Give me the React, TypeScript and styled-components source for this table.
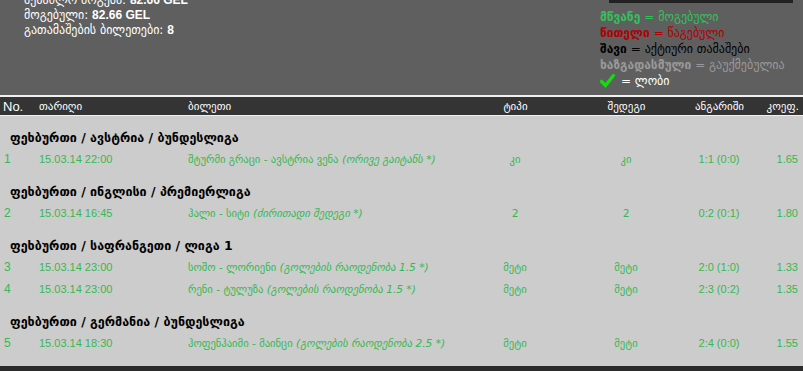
import styled, { createGlobalStyle } from "styled-components";

const GlobalStyle = createGlobalStyle`
    html, body {
        margin: 0;
        padding: 0;
        background: #2b2b2b;
        overflow: hidden;
    }
    body {
        font-family: "Liberation Sans", "DejaVu Sans", sans-serif;
    }
`;

type Bet = {
    no: number;
    date: string;
    teams: string;
    market: string;
    type: string;
    result: string;
    score: string;
    coef: string;
};

type Group = { title: string; bets: Bet[] };

const groups: Group[] = [
    {
        title: "ფეხბურთი / ავსტრია / ბუნდესლიგა",
        bets: [
            {
                no: 1,
                date: "15.03.14 22:00",
                teams: "შტურმი გრაცი - ავსტრია ვენა",
                market: "(ორივე გაიტანს *)",
                type: "კი",
                result: "კი",
                score: "1:1 (0:0)",
                coef: "1.65"
            }
        ]
    },
    {
        title: "ფეხბურთი / ინგლისი / პრემიერლიგა",
        bets: [
            {
                no: 2,
                date: "15.03.14 16:45",
                teams: "ჰალი - სიტი",
                market: "(ძირითადი შედეგი *)",
                type: "2",
                result: "2",
                score: "0:2 (0:1)",
                coef: "1.80"
            }
        ]
    },
    {
        title: "ფეხბურთი / საფრანგეთი / ლიგა 1",
        bets: [
            {
                no: 3,
                date: "15.03.14 23:00",
                teams: "სოშო - ლორიენი",
                market: "(გოლების რაოდენობა 1.5 *)",
                type: "მეტი",
                result: "მეტი",
                score: "2:0 (1:0)",
                coef: "1.33"
            },
            {
                no: 4,
                date: "15.03.14 23:00",
                teams: "რენი - ტულუზა",
                market: "(გოლების რაოდენობა 1.5 *)",
                type: "მეტი",
                result: "მეტი",
                score: "2:3 (0:2)",
                coef: "1.35"
            }
        ]
    },
    {
        title: "ფეხბურთი / გერმანია / ბუნდესლიგა",
        bets: [
            {
                no: 5,
                date: "15.03.14 18:30",
                teams: "ჰოფენჰაიმი - მაინცი",
                market: "(გოლების რაოდენობა 2.5 *)",
                type: "მეტი",
                result: "მეტი",
                score: "2:4 (0:0)",
                coef: "1.55"
            }
        ]
    }
];

const Checkmark = () => (
    <svg width="15" height="14" viewBox="0 0 15 14">
        <path
            d="M1.5 7.5 L5.5 11.5 L13.5 1.5"
            fill="none"
            stroke="#11dd11"
            strokeWidth="3.2"
            strokeLinecap="square"
        />
    </svg>
);

const App = () => {
    return (
        <>
            <GlobalStyle />
            <Page>
                <TopPanel>
                    <Stats>
                        <div>
                            შესაძლო მოგება: <b>82.66 GEL</b>
                        </div>
                        <div>
                            მოგებული: <b>82.66 GEL</b>
                        </div>
                        <div>
                            გათამაშების ბილეთები: <b>8</b>
                        </div>
                    </Stats>
                    <Legend>
                        <TopBar />
                        <LegendLine $color="#33c15a">
                            <b>მწვანე</b> = მოგებული
                        </LegendLine>
                        <LegendLine $color="#b00000">
                            <b>წითელი</b> = წაგებული
                        </LegendLine>
                        <LegendLine $color="#000000">
                            <b>შავი</b> = აქტიური თამაშები
                        </LegendLine>
                        <LegendLine $color="#9a9a9a">
                            <b>ხაზგადასმული</b> = გაუქმებულია
                        </LegendLine>
                        <LegendLine $color="#ffffff">
                            <Checkmark /> = ლობი
                        </LegendLine>
                    </Legend>
                </TopPanel>
                <HeadRow>
                    <HeadCell>No.</HeadCell>
                    <HeadCell $geo>თარიღი</HeadCell>
                    <HeadCell $geo>ბილეთი</HeadCell>
                    <HeadCell $geo $align="center">ტიპი</HeadCell>
                    <HeadCell $geo $align="center">შედეგი</HeadCell>
                    <HeadCell $geo $align="center">ანგარიში</HeadCell>
                    <HeadCell $geo $align="right">კოეფ.</HeadCell>
                </HeadRow>
                <Body>
                    {groups.map(g => (
                        <div key={g.title}>
                            <GroupTitle>{g.title}</GroupTitle>
                            {g.bets.map(b => (
                                <BetRow key={b.no}>
                                    <Num>{b.no}</Num>
                                    <Cell>{b.date}</Cell>
                                    <Cell $geo>
                                        {b.teams} <i>{b.market}</i>
                                    </Cell>
                                    <Cell $geo $align="center">
                                        {b.type}
                                    </Cell>
                                    <Cell $geo $align="center">
                                        {b.result}
                                    </Cell>
                                    <Cell $align="center">{b.score}</Cell>
                                    <Cell $align="right">{b.coef}</Cell>
                                </BetRow>
                            ))}
                        </div>
                    ))}
                </Body>
                <Footer />
            </Page>
        </>
    );
};

const COLUMNS = "36px 149px 277px 108px 114px 72px 1fr";
const GEO = `"DejaVu Sans", "Liberation Sans", sans-serif`;

const Page = styled.div`
    width: 803px;
    height: 371px;
    display: flex;
    flex-direction: column;
    background: #cccccc;
`;

const TopPanel = styled.div`
    height: 95px;
    flex-shrink: 0;
    display: flex;
    justify-content: space-between;
    background: #5f5f5f;
    border-bottom: 2px solid #f0f0f0;
    overflow: hidden;
`;

const Stats = styled.div`
    margin-top: -7px;
    padding-left: 24px;
    color: #ffffff;
    font-family: ${GEO};
    font-size: 12px;
    line-height: 15px;
    b {
        font-family: "Liberation Sans", sans-serif;
        font-size: 12px;
        font-weight: bold;
    }
`;

const Legend = styled.div`
    width: 203px;
    display: flex;
    flex-direction: column;
`;

const TopBar = styled.div`
    width: 184px;
    height: 3px;
    margin-left: 9px;
    margin-bottom: 6px;
    background: #222222;
`;

const LegendLine = styled.div<{ $color: string }>`
    display: flex;
    align-items: center;
    gap: 4px;
    height: 16px;
    color: ${p => p.$color};
    font-family: ${GEO};
    font-size: 12px;
    white-space: nowrap;
    b {
        font-weight: bold;
    }
    svg {
        margin-right: 2px;
    }
`;

const HeadRow = styled.div`
    display: grid;
    grid-template-columns: ${COLUMNS};
    align-items: center;
    height: 18px;
    flex-shrink: 0;
    background: #343434;
    border-bottom: 1px solid #f0f0f0;
    color: #ffffff;
`;

const HeadCell = styled.div<{ $geo?: boolean; $align?: string }>`
    padding: 0 4px 0 3px;
    text-align: ${p => p.$align || "left"};
    font-family: ${p => (p.$geo ? GEO : `"Liberation Sans", sans-serif`)};
    font-size: ${p => (p.$geo ? "11px" : "13px")};
    white-space: nowrap;
`;

const Body = styled.div`
    flex: 1;
    padding-bottom: 11px;
`;

const GroupTitle = styled.div`
    padding: 12px 0 0 10px;
    height: 20px;
    line-height: 20px;
    color: #000000;
    font-family: ${GEO};
    font-size: 12.5px;
    font-weight: bold;
    white-space: nowrap;
`;

const BetRow = styled.div`
    display: grid;
    grid-template-columns: ${COLUMNS};
    align-items: center;
    height: 22px;
    color: #35b84f;
`;

const Cell = styled.div<{ $geo?: boolean; $align?: string }>`
    padding: 0 5px 0 3px;
    text-align: ${p => p.$align || "left"};
    font-family: ${p => (p.$geo ? GEO : `"Liberation Sans", sans-serif`)};
    font-size: ${p => (p.$geo ? "10.6px" : "11px")};
    white-space: nowrap;
    i {
        font-style: italic;
    }
`;

const Num = styled(Cell)`
    padding-left: 4px;
    font-size: 12px;
`;

const Footer = styled.div`
    height: 5px;
    flex-shrink: 0;
    background: #2b2b2b;
`;

export default App;
